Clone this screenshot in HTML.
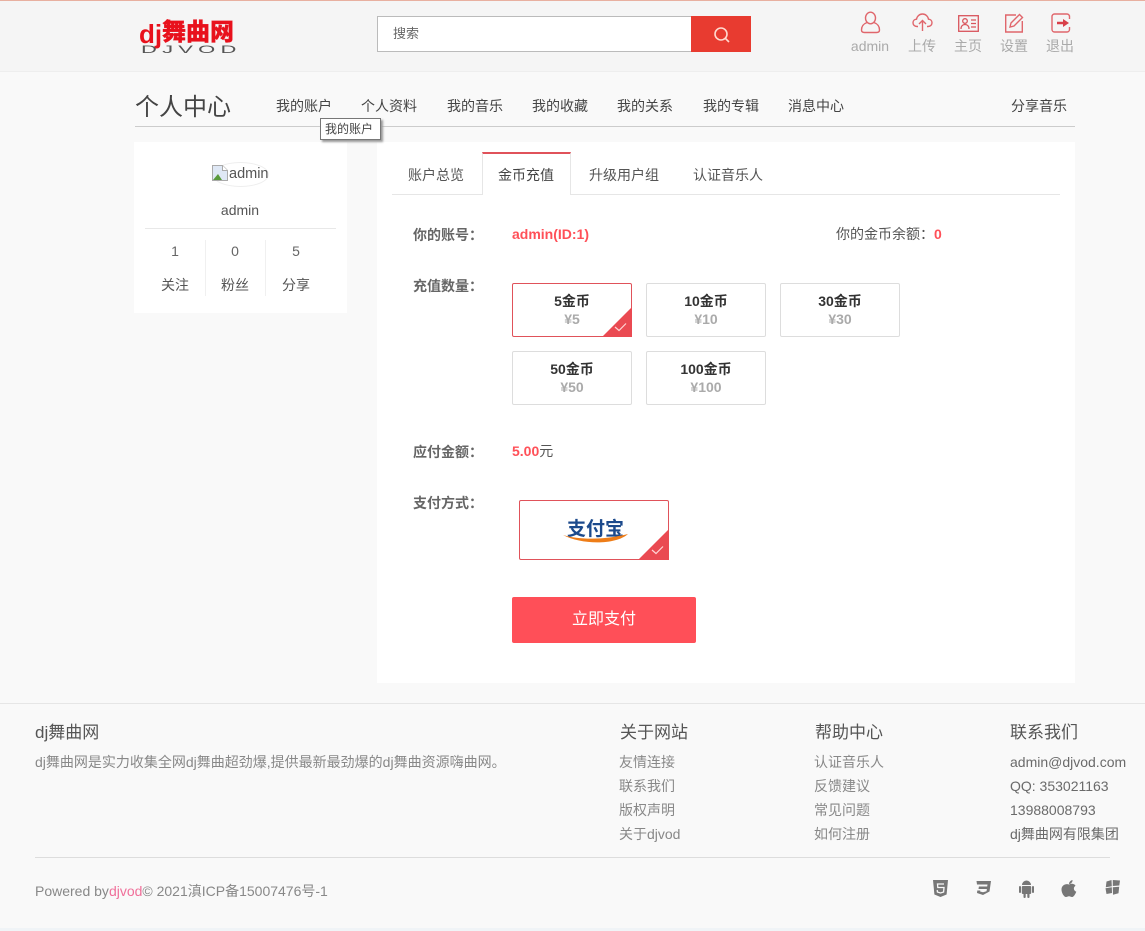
<!DOCTYPE html>
<html lang="zh"><head><meta charset="utf-8"><title>个人中心</title>
<style>
*{margin:0;padding:0;box-sizing:border-box}
html,body{width:1145px;height:931px;overflow:hidden;background:#f9f9f9}
body{position:relative;font-family:"Liberation Sans","Noto Sans CJK SC",sans-serif;font-size:14px;color:#555}
.a{position:absolute;white-space:nowrap;line-height:1.2}
.c{transform:translateX(-50%)}
.box{position:absolute;background:#fff;border:1px solid #ddd;border-radius:2px;width:120px;height:54px;text-align:center}
.box b{display:block;margin-top:8px;font-size:14px;line-height:18px;color:#333}
.box i{display:block;font-style:normal;font-weight:bold;font-size:14px;line-height:18px;color:#aaa}
.sel{border-color:#e0525a}
.lbl{font-weight:bold;color:#666}
.nav{top:98px;color:#444}
.ft{color:#888}
.fh{font-size:17px;color:#555}
.fr{color:#6a6a6a}
</style></head><body>
<div class="a" style="left:0;top:0;width:1145px;height:72px;background:#f5f5f5;border-top:1px solid #e8b0a0;border-bottom:1px solid #eee"></div>
<div class="a" style="left:139px;top:20px;font-family:'Liberation Sans',sans-serif;font-weight:bold;font-size:26px;color:#e8111c;line-height:28px">dj</div>
<div class="a" style="left:162px;top:14px;font-family:'Noto Sans CJK SC',sans-serif;font-weight:900;font-size:24px;color:#e8111c;line-height:32px;-webkit-text-stroke:.3px #e8111c">舞曲网</div>
<div class="a" style="left:141px;top:44px;font-size:11px;line-height:12px;letter-spacing:2.600px;color:#555;transform:scaleX(2);transform-origin:top left">DJVOD</div>

<div class="a" style="left:377px;top:16px;width:315px;height:36px;background:#fff;border:1px solid #bbb;padding:9px 15px;color:#666;font-size:13px">搜索</div>
<div class="a" style="left:691px;top:16px;width:60px;height:36px;background:#e83b30"></div>
<svg class="a" style="left:712px;top:25px" width="20" height="20" viewBox="0 0 20 20" fill="none" stroke="#ffd9cf" stroke-width="1.6"><circle cx="9" cy="9" r="6"/><path d="M13.500 13.500 17 17"/></svg>

<svg class="a" style="left:860px;top:11px" width="21" height="23" viewBox="0 0 21 23" fill="none" stroke="#e0666c" stroke-width="1.4"><ellipse cx="10.500" cy="7" rx="5" ry="5.800"/><path d="M7 11.500C3 13 1.500 16 1.500 19c0 2 1.500 2.500 3 2.500h12c1.500 0 3-.5 3-2.500 0-3-1.500-6-5.500-7.500"/></svg>
<svg class="a" style="left:912px;top:13px" width="21" height="19" viewBox="0 0 21 19" fill="none" stroke="#e0666c" stroke-width="1.4"><path d="M6 13.500H5C2.500 13.500 1 11.800 1 9.800 1 7.800 2.500 6.300 4.500 6.200 5 3.200 7.500 1 10.500 1c3 0 5.500 2.200 6 5.200 2 .1 3.500 1.600 3.500 3.600s-1.500 3.700-4 3.700h-1"/><path d="M10.500 18V8M7 11l3.500-3.500L14 11"/></svg>
<svg class="a" style="left:958px;top:15px" width="21" height="17" viewBox="0 0 21 17" fill="none" stroke="#d9555c" stroke-width="1.3"><rect x=".7" y=".7" width="19.600" height="15.600"/><circle cx="7" cy="6" r="2.300"/><path d="M3 14c0-3 1.800-4.500 4-4.500s4 1.500 4 4.500M13 5h5M13 8.500h5M13 12h5"/></svg>
<svg class="a" style="left:1004px;top:13px" width="20" height="20" viewBox="0 0 20 20" fill="none" stroke="#e0666c" stroke-width="1.4"><path d="M12 2H1.700v17h16.600V8"/><path d="M6 14l1-4L15.500 1.500l3 3L10 13z"/></svg>
<svg class="a" style="left:1051px;top:13px" width="20" height="20" viewBox="0 0 20 20" fill="none"><path d="M18.500 6V3.500a2.500 2.500 0 0 0-2.500-2.500H3.500A2.500 2.500 0 0 0 1 3.500v13A2.500 2.500 0 0 0 3.500 19H16a2.500 2.500 0 0 0 2.500-2.500V14" stroke="#e0666c" stroke-width="1.400"/><path d="M6 8.700h6V6l6 4-6 4v-2.700H6z" fill="#d9404a"/></svg>
<div class="a c" style="left:870px;top:38px;color:#aaa;font-size:14px">admin</div>
<div class="a c" style="left:922px;top:38px;color:#aaa;font-size:14px">上传</div>
<div class="a c" style="left:968px;top:38px;color:#aaa;font-size:14px">主页</div>
<div class="a c" style="left:1014px;top:38px;color:#aaa;font-size:14px">设置</div>
<div class="a c" style="left:1060px;top:38px;color:#aaa;font-size:14px">退出</div>

<div class="a" style="left:135px;top:94px;font-size:24px;color:#444">个人中心</div>
<div class="a nav" style="left:276px">我的账户</div>
<div class="a nav" style="left:361px">个人资料</div>
<div class="a nav" style="left:447px">我的音乐</div>
<div class="a nav" style="left:532px">我的收藏</div>
<div class="a nav" style="left:617px">我的关系</div>
<div class="a nav" style="left:703px">我的专辑</div>
<div class="a nav" style="left:788px">消息中心</div>
<div class="a nav" style="left:1011px">分享音乐</div>
<div class="a" style="left:135px;top:126px;width:940px;height:1px;background:#ccc"></div>
<div class="a" style="left:320px;top:118px;width:61px;height:22px;background:#fff;border:1px solid #777;box-shadow:2px 2px 2px #999;font-size:12px;line-height:20px;padding-left:4px;color:#444;z-index:3">我的账户</div>

<div class="a" style="left:134px;top:142px;width:213px;height:171px;background:#fff"></div>
<div class="a" style="left:212px;top:162px;width:57px;height:25px;border:1px solid #eee;border-radius:50%"></div>
<svg class="a" style="left:212px;top:165px" width="16" height="16" viewBox="0 0 16 16"><path d="M.5.500h10l5 5v10H.5z" fill="#dfe8f5" stroke="#aaa"/><path d="M1 15l5-6 4 6z" fill="#5a9a3c"/><path d="M10.500.500v5h5" fill="#fff" stroke="#aaa"/></svg>
<div class="a" style="left:229px;top:166px;font-size:14.500px;color:#555">admin</div>
<div class="a c" style="left:240px;top:202px;font-size:14px;color:#555">admin</div>
<div class="a" style="left:145px;top:228px;width:191px;height:1px;background:#e8e8e8"></div>
<div class="a" style="left:205px;top:240px;width:1px;height:56px;background:#f0f0f0"></div>
<div class="a" style="left:265px;top:240px;width:1px;height:56px;background:#f0f0f0"></div>
<div class="a c" style="left:175px;top:243px;color:#666">1</div>
<div class="a c" style="left:235px;top:243px;color:#666">0</div>
<div class="a c" style="left:296px;top:243px;color:#666">5</div>
<div class="a c" style="left:175px;top:277px">关注</div>
<div class="a c" style="left:235px;top:277px">粉丝</div>
<div class="a c" style="left:296px;top:277px">分享</div>

<div class="a" style="left:377px;top:142px;width:698px;height:541px;background:#fff"></div>
<div class="a" style="left:392px;top:194px;width:668px;height:1px;background:#e6e6e6"></div>
<div class="a" style="left:482px;top:152px;width:89px;height:43px;background:#fff;border:1px solid #e6e6e6;border-top:2px solid #e0525a;border-bottom:0"></div>
<div class="a" style="left:408px;top:167px;font-size:14px">账户总览</div>
<div class="a" style="left:498px;top:167px;font-size:14px;color:#444">金币充值</div>
<div class="a" style="left:589px;top:167px;font-size:14px">升级用户组</div>
<div class="a" style="left:693px;top:167px;font-size:14px">认证音乐人</div>

<div class="a lbl" style="left:413px;top:227px">你的账号：</div>
<div class="a" style="left:512px;top:226px;font-weight:bold;color:#ff5058">admin(ID:1)</div>
<div class="a" style="left:836px;top:226px">你的金币余额：</div>
<div class="a" style="left:934px;top:226px;font-weight:bold;color:#ff5058">0</div>
<div class="a lbl" style="left:413px;top:278px">充值数量：</div>

<div class="box sel" style="left:512px;top:283px"><b>5金币</b><i>¥5</i></div>
<svg class="a" style="left:602px;top:307px" width="30" height="30" viewBox="0 0 30 30"><path d="M30 0V30H0z" fill="#ea4a52"/><path d="M13 20l4 3.500 7-7" fill="none" stroke="#ffd5d5" stroke-width="1.200"/></svg>
<div class="box" style="left:646px;top:283px"><b>10金币</b><i>¥10</i></div>
<div class="box" style="left:780px;top:283px"><b>30金币</b><i>¥30</i></div>
<div class="box" style="left:512px;top:351px"><b>50金币</b><i>¥50</i></div>
<div class="box" style="left:646px;top:351px"><b>100金币</b><i>¥100</i></div>

<div class="a lbl" style="left:413px;top:444px">应付金额：</div>
<div class="a" style="left:512px;top:443px"><b style="color:#ff5058">5.00</b>元</div>
<div class="a lbl" style="left:413px;top:495px">支付方式：</div>

<div class="box sel" style="left:519px;top:500px;width:150px;height:60px"></div>
<div class="a" style="left:567px;top:516px;font-family:'Noto Sans CJK SC',sans-serif;font-weight:bold;font-size:19px;letter-spacing:0;color:#1c4a8c;line-height:24px">支付宝</div>
<svg class="a" style="left:562px;top:530px" width="67" height="13" viewBox="0 0 67 13"><path d="M1 5C18 10 42 10 66 4 54 15 20 15 1 5z" fill="#ee7d18"/></svg>
<svg class="a" style="left:638px;top:529px" width="31" height="31" viewBox="0 0 31 31"><path d="M31 0V31H0z" fill="#ea4a52"/><path d="M14 21l4 3.500 7-7" fill="none" stroke="#ffd5d5" stroke-width="1.200"/></svg>

<div class="a" style="left:512px;top:597px;width:184px;height:46px;background:#ff4f58;border-radius:2px;color:#fff;font-size:16px;line-height:45px;text-align:center">立即支付</div>

<div class="a" style="left:0;top:703px;width:1145px;height:1px;background:#e6e6e6"></div>
<div class="a fh" style="left:35px;top:723px">dj舞曲网</div>
<div class="a ft" style="left:35px;top:754px">dj舞曲网是实力收集全网dj舞曲超劲爆,提供最新最劲爆的dj舞曲资源嗨曲网。</div>
<div class="a fh" style="left:620px;top:723px">关于网站</div>
<div class="a ft" style="left:619px;top:754px">友情连接</div>
<div class="a ft" style="left:619px;top:778px">联系我们</div>
<div class="a ft" style="left:619px;top:802px">版权声明</div>
<div class="a ft" style="left:619px;top:826px">关于djvod</div>
<div class="a fh" style="left:815px;top:723px">帮助中心</div>
<div class="a ft" style="left:814px;top:754px">认证音乐人</div>
<div class="a ft" style="left:814px;top:778px">反馈建议</div>
<div class="a ft" style="left:814px;top:802px">常见问题</div>
<div class="a ft" style="left:814px;top:826px">如何注册</div>
<div class="a fh" style="left:1010px;top:723px">联系我们</div>
<div class="a fr" style="left:1010px;top:754px">admin@djvod.com</div>
<div class="a fr" style="left:1010px;top:778px">QQ: 353021163</div>
<div class="a fr" style="left:1010px;top:802px">13988008793</div>
<div class="a fr" style="left:1010px;top:826px">dj舞曲网有限集团</div>
<div class="a" style="left:35px;top:857px;width:1075px;height:1px;background:#ddd"></div>
<div class="a ft" style="left:35px;top:883px">Powered by<span style="color:#f0709a">djvod</span>© 2021滇ICP备15007476号-1</div>
<div class="a" style="left:0;top:928px;width:1145px;height:3px;background:#f0f4f7"></div>

<svg class="a" style="left:933px;top:880px" width="15" height="17" viewBox="0 0 15 17"><path d="M0 0h15l-1.400 14.500L7.500 17 1.400 14.500z" fill="#777"/><path d="M11 4H4.500l.3 3.500H11l-.4 4.500-3.100 1-3.100-1-.2-2" fill="none" stroke="#f8f8f8" stroke-width="1.300"/></svg>
<svg class="a" style="left:976px;top:881px" width="15" height="14" viewBox="0 0 15 14"><path d="M.5 0H15l-1.500 10.500L7 14l-6-2 .3-2.500h3l-.2 1L7 11.300l3.500-1 .4-2.300H2.500l.4-2.500h8.300l.3-2H1z" fill="#777"/></svg>
<svg class="a" style="left:1018px;top:880px" width="17" height="18" viewBox="0 0 17 18" fill="#777"><path d="M4 5a4.500 4.500 0 0 1 9 0z"/><rect x="3.800" y="6" width="9.400" height="8" rx="1"/><rect x="1" y="6" width="2" height="7" rx="1"/><rect x="14" y="6" width="2" height="7" rx="1"/><rect x="5.500" y="13" width="2.200" height="5" rx="1"/><rect x="9.300" y="13" width="2.200" height="5" rx="1"/></svg>
<svg class="a" style="left:1061px;top:880px" width="16" height="17" viewBox="0 0 16 17" fill="#777"><path d="M8 4.500c1.500-1 5-1.500 6.500 1.200-2.500 1.700-2 5 .8 6C14.200 14.500 12.500 17 11 17c-1.200 0-1.800-.7-3-.7s-1.800.7-3 .7C3 17 .5 13 .5 9.500.5 5 5 3.300 8 4.500z"/><path d="M8 4c0-2 1.500-3.500 3.500-4 .2 2-1.300 3.800-3.500 4z"/></svg>
<svg class="a" style="left:1105px;top:880px" width="16" height="15" viewBox="0 0 16 15" fill="#777"><path d="M1.500 1.500l5-1.500 .3 6.200-6 1zM7.800 0L15 .5l-.7 5-6.500.5zM.5 8.300l6.300-1L7 13l-5.500 1zM7.800 7.200l6.400-.5-.7 6.500-5.500 1.500z"/></svg>
</body></html>
